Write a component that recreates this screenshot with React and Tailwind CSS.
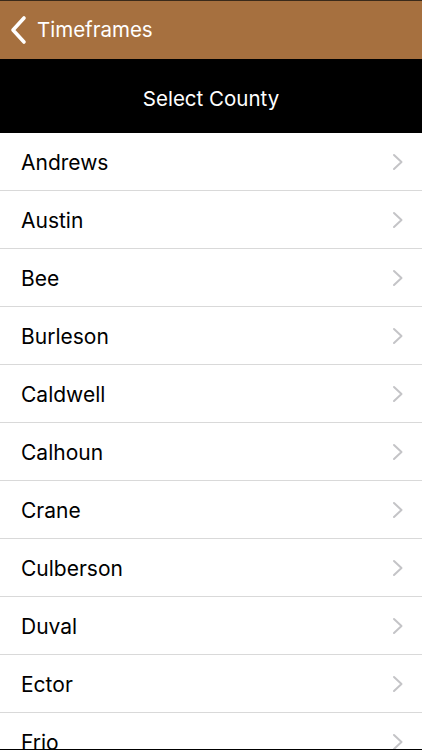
import { ChevronLeft, ChevronRight } from 'lucide-react';

const counties = ['Andrews', 'Austin', 'Bee', 'Burleson', 'Caldwell', 'Calhoun', 'Crane', 'Culberson', 'Duval', 'Ector', 'Frio', 'Gaines'];

export default function App() {
  return (
    <div className="h-[750px] flex flex-col overflow-hidden bg-white border-b border-black" style={{ fontFamily: 'Inter, "Liberation Sans", sans-serif' }}>
      <div className="h-[59px] shrink-0 bg-[#a6703f] border-t border-[#3a2a1a] flex items-center text-white">
        <svg width="20" height="30" viewBox="0 0 20 30" className="ml-[9px]" fill="none" stroke="white" strokeWidth="3.6" strokeLinecap="round" strokeLinejoin="round">
          <path d="M15 3 L4 15 L15 27" />
        </svg>
        <span className="ml-[8px] text-[20.5px] leading-none pt-[1px]">Timeframes</span>
      </div>
      <div className="h-[74px] shrink-0 bg-black flex items-center justify-center text-white text-[20.5px] pt-[6px]">Select County</div>
      <ul className="flex-1 overflow-hidden">
        {counties.map((c) => (
          <li key={c} className="h-[58px] border-b border-[#d9d9d9] flex items-center justify-between pl-[21px] pr-[18px]">
            <span className="text-[21px] text-black pt-[2px]">{c}</span>
            <svg width="12" height="18" viewBox="0 0 12 18" fill="none" stroke="#c4c4c7" strokeWidth="2" strokeLinecap="round" strokeLinejoin="round">
              <path d="M2 2 L9.5 9 L2 16" />
            </svg>
          </li>
        ))}
      </ul>
    </div>
  );
}
